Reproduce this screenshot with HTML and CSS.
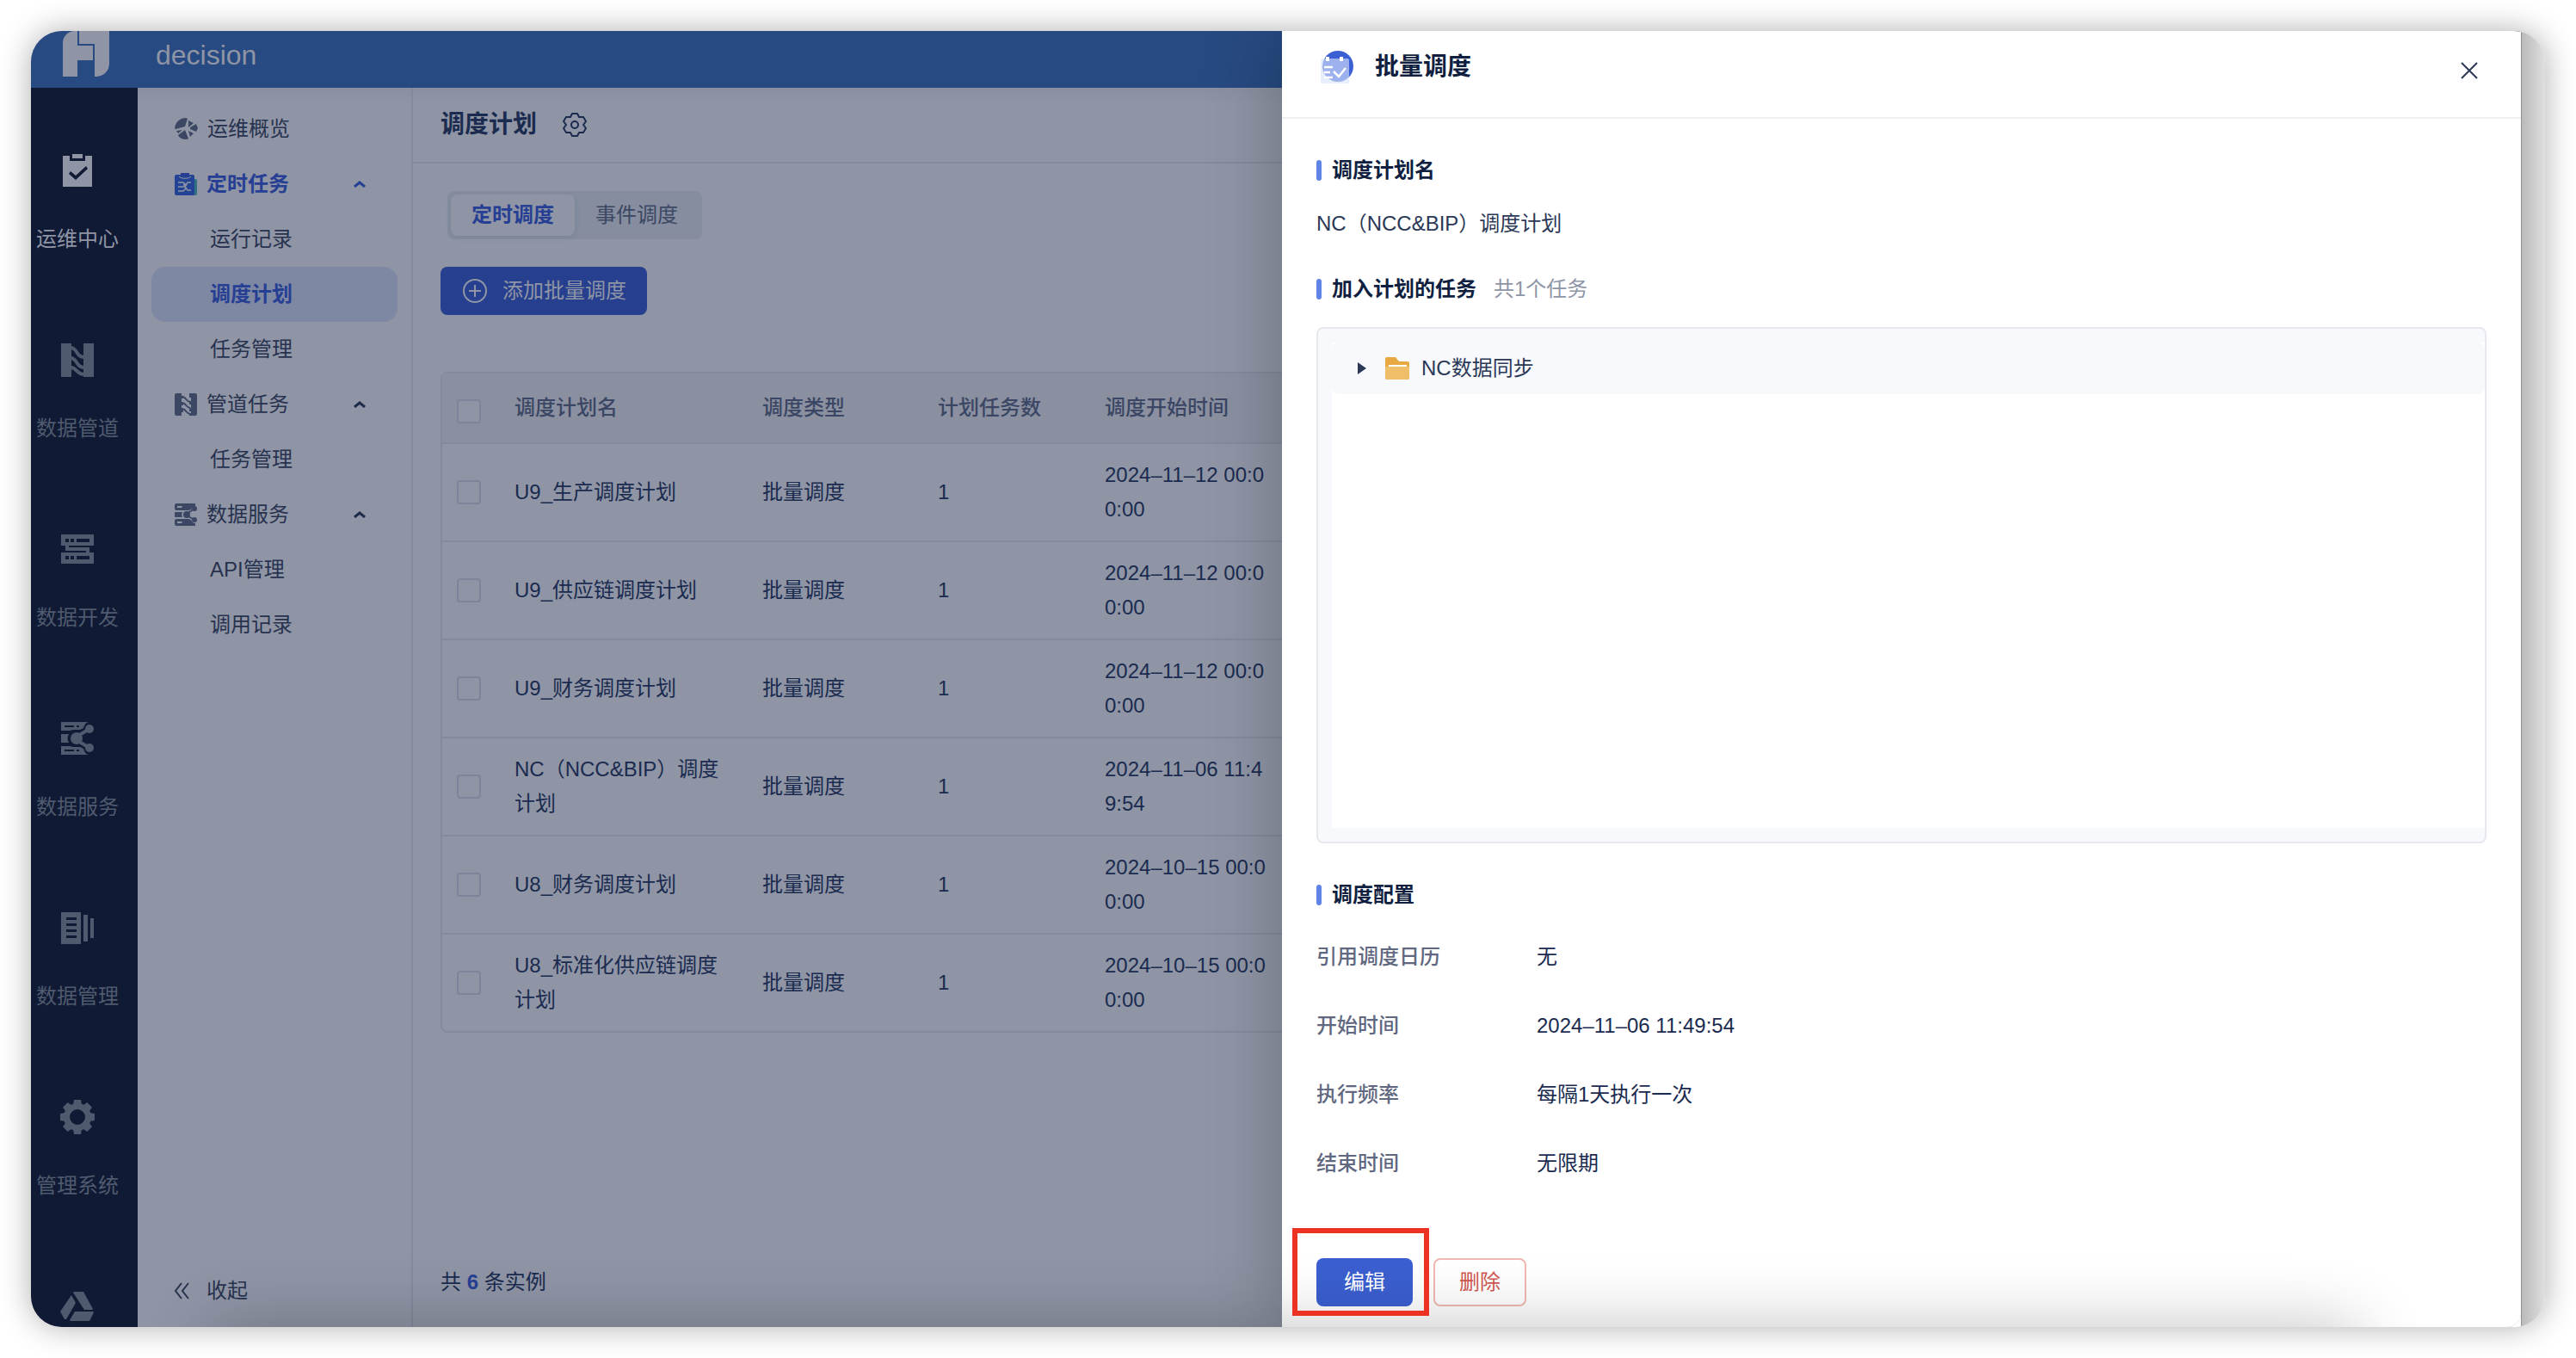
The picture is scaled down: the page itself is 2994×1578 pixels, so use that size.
FILE: index.html
```html
<!DOCTYPE html>
<html lang="zh-CN">
<head>
<meta charset="utf-8">
<title>调度计划 - decision</title>
<link rel="stylesheet" href="styles.css">
</head>
<body>
<svg class="sprite" aria-hidden="true">
  <symbol id="i-pipe" viewBox="0 0 38 39"><path d="M0 0h12v39H0zM26 0h12v39H26z" fill="currentColor"/><path d="M11 5c8 0 6 11 16 11M11 17c8 0 6 11 16 11M11 28c8 0 6 8 16 8" fill="none" stroke="currentColor" stroke-width="4"/></symbol>
  <symbol id="i-pipe-s" viewBox="0 0 26 26"><path d="M2 0h6v3h2v3H8v5h2v3H8v5h2v3H8v4H2a2 2 0 0 1-2-2V2a2 2 0 0 1 2-2zM24 0h-7v5h2v4h-2v4h2v4h-2v4h2v2h-2v3h7a2 2 0 0 0 2-2V2a2 2 0 0 0-2-2z" fill="currentColor"/><path d="M8 4c6 0 4 5 10 6M8 11c6 0 4 5 10 6M8 18c6 0 4 5 10 6" fill="none" stroke="currentColor" stroke-width="2"/></symbol>
  <symbol id="i-service" viewBox="0 0 38 38"><path fill-rule="evenodd" d="M0 0h32c-4 1-5 4-6 7l-4 2h-8l-4 1H0zM4 4v2h11V4zM18 4v2h3V4zM0 14h9c-2 3-2 7 0 10H0zM0 28h10l4 1h8l4 2c1 3 2 6 6 7H0zM4 32v2h11v-2zM18 32v2h3v-2z" fill="currentColor"/><circle cx="18" cy="19" r="7" fill="currentColor"/><circle cx="33" cy="8" r="5" fill="currentColor"/><circle cx="33" cy="30" r="5" fill="currentColor"/><path d="M33 8 18 17M33 30 18 21" stroke="currentColor" stroke-width="4"/></symbol>
  <symbol id="i-service-s" viewBox="0 0 26 26"><path fill-rule="evenodd" d="M2 0h22v3c-3 0-4 2-5 4l-3 1H2a2 2 0 0 1-2-2V2a2 2 0 0 1 2-2zM3 3v2h5l1-2zM1 10h8c-1 2-1 4 0 6H1a1 1 0 0 1-1-1v-4a1 1 0 0 1 1-1zM2 18h14l3 1c1 2 2 4 5 4v3H2a2 2 0 0 1-2-2v-4a2 2 0 0 1 2-2zM3 21v2h5l1-2z" fill="currentColor"/><circle cx="14" cy="13" r="4" fill="currentColor"/><circle cx="23" cy="6" r="3" fill="currentColor"/><circle cx="23" cy="19" r="3" fill="currentColor"/><path d="m23 6-9 6M23 19l-9-5" stroke="currentColor" stroke-width="2"/></symbol>
  <symbol id="i-up" viewBox="0 0 14 8"><path d="m1 7 6-5 6 5" fill="none" stroke="currentColor" stroke-width="3"/></symbol>
</svg>

<div class="window">
  <div class="app">
    <header class="topbar">
      <svg class="logo" viewBox="0 0 54 53" aria-label="logo"><path d="M17 0v17h18v17H17v19H0V14A14 14 0 0 1 14 0zM19 0h35v38a15 15 0 0 1-15 15h-2V15H19z" fill="currentColor"/></svg>
      <span class="brand">decision</span>
    </header>

    <div class="body">
      <nav class="rail" aria-label="主导航">
        <a class="rail-item is-active" href="#ops"><svg width="34" height="38" viewBox="0 0 34 38"><path fill-rule="evenodd" d="M0 2h8v6h18V2h8v36H0zM9 20l-2 3 8 7 14-13-2-3-12 11z" fill="currentColor"/><path d="M11 0h12v5H11z" fill="currentColor"/></svg><span>运维中心</span></a>
        <a class="rail-item" href="#pipe"><svg width="38" height="39"><use href="#i-pipe"/></svg><span>数据管道</span></a>
        <a class="rail-item" href="#dev"><svg width="38" height="34" viewBox="0 0 38 34"><path fill-rule="evenodd" d="M0 0h38v13H0zM5 5v4h4V5zM11 5v4h4V5zM18 5v4h15V5zM0 21h38v13H0zM5 25v4h4v-4zM11 25v4h4v-4zM18 25v4h15v-4zM5 13h4v2h24v6h-4v-2H5z" fill="currentColor"/></svg><span>数据开发</span></a>
        <a class="rail-item" href="#service"><svg width="38" height="38"><use href="#i-service"/></svg><span>数据服务</span></a>
        <a class="rail-item" href="#manage"><svg width="38" height="37" viewBox="0 0 38 37"><path fill-rule="evenodd" d="M0 0h23v37H0zM6 6v3h12V6zM6 13v3h12v-3zM6 20v3h12v-3zM6 27v3h12v-3zM26 3h5v31h-5zM34 7h4v23h-4z" fill="currentColor"/></svg><span>数据管理</span></a>
        <a class="rail-item" href="#system"><svg width="40" height="40" viewBox="-20 -20 40 40"><g fill="currentColor"><path fill-rule="evenodd" d="M0-16a16 16 0 1 0 0 32 16 16 0 1 0 0-32zM0-9a9 9 0 1 1 0 18 9 9 0 1 1 0-18z"/><path id="tooth" d="m-5-14 1-6h8l1 6z"/><use href="#tooth" transform="rotate(45)"/><use href="#tooth" transform="rotate(90)"/><use href="#tooth" transform="rotate(135)"/><use href="#tooth" transform="rotate(180)"/><use href="#tooth" transform="rotate(225)"/><use href="#tooth" transform="rotate(270)"/><use href="#tooth" transform="rotate(315)"/></g></svg><span>管理系统</span></a>
        <a class="rail-item" href="#drive" aria-label="更多"><svg width="40" height="36" viewBox="0 0 40 36"><path d="M16 1h11l11 20-1 1H28L15 2zM13 5l5 9-11 19H5L0 24zM17 24h21l1 1-5 10H12l-1-1z" fill="currentColor"/></svg></a>
      </nav>

      <aside class="side">
        <ul class="menu">
          <li><a href="#overview"><svg width="27" height="26" viewBox="0 0 27 26"><path d="M0 12C1 4 7 0 13 0l2 1-3 9-11 3zM16 3l6 3-6 5zM18 11l7-4 2 5-2 4-7-3zM16 15l6 3-4 4zM12 14l4 10-2 1c-5 0-9-2-10-5zM2 15l7-1-5 4z" fill="currentColor"/></svg><span>运维概览</span></a></li>
          <li><a class="is-open" href="#timed"><svg width="26" height="26" viewBox="0 0 26 26"><path d="M20 7h4a2 2 0 0 1 2 2v15a2 2 0 0 1-2 2h-4z" fill="#2f7181"/><path d="M2 2h19a2 2 0 0 1 2 2v20a2 2 0 0 1-2 2H2a2 2 0 0 1-2-2V4a2 2 0 0 1 2-2z" fill="#234494"/><path d="M5 4c2 3 12 3 14 0" fill="none" stroke="#8f95a5" stroke-width="1"/><path d="M7 0h10v4H7z" fill="#263f94"/><path d="M4 11h6l3 3h-3M4 16h8M4 21h6l3-3M19 11h-4l-3 5 3 4h4" fill="none" stroke="#8f95a5" stroke-width="1.5"/></svg><span>定时任务</span><svg class="caret" width="14" height="8"><use href="#i-up"/></svg></a></li>
          <li><a class="sub" href="#runs">运行记录</a></li>
          <li><a class="sub is-selected" href="#plans">调度计划</a></li>
          <li><a class="sub" href="#tasks">任务管理</a></li>
          <li><a href="#pipe-tasks"><svg width="26" height="26"><use href="#i-pipe-s"/></svg><span>管道任务</span><svg class="caret" width="14" height="8"><use href="#i-up"/></svg></a></li>
          <li><a class="sub" href="#pipe-manage">任务管理</a></li>
          <li><a href="#services"><svg width="26" height="26"><use href="#i-service-s"/></svg><span>数据服务</span><svg class="caret" width="14" height="8"><use href="#i-up"/></svg></a></li>
          <li><a class="sub" href="#api">API管理</a></li>
          <li><a class="sub" href="#calls">调用记录</a></li>
        </ul>
        <button class="collapse" type="button"><svg width="26" height="20" viewBox="0 0 26 20"><path d="M9 1 2 10l7 9M17 1l-7 9 7 9" fill="none" stroke="currentColor" stroke-width="2"/></svg><span>收起</span></button>
      </aside>

      <main class="main">
        <div class="page-head">
          <h1>调度计划</h1>
          <button class="icon-btn" type="button" aria-label="设置"><svg width="28" height="28" viewBox="0 0 28 28"><path d="M11 1h6l2 4h5l3 5-3 4 3 4-3 5h-5l-2 4h-6l-2-4H4l-3-5 3-4-3-4 3-5h5z" fill="none" stroke="currentColor" stroke-width="2" stroke-linejoin="round"/><circle cx="14" cy="14" r="4" fill="none" stroke="currentColor" stroke-width="2"/></svg></button>
        </div>
        <div class="content">
          <div class="tabs" role="tablist">
            <button class="tab is-on" role="tab" aria-selected="true" type="button">定时调度</button>
            <button class="tab" role="tab" aria-selected="false" type="button">事件调度</button>
          </div>
          <button class="add" type="button"><svg width="28" height="28" viewBox="0 0 28 28"><circle cx="14" cy="14" r="13" fill="none" stroke="currentColor" stroke-width="2"/><path d="M14 7v14M7 14h14" stroke="currentColor" stroke-width="2"/></svg><span>添加批量调度</span></button>

          <table class="plans">
            <colgroup><col class="c-check"><col class="c-name"><col class="c-type"><col class="c-count"><col class="c-start"><col></colgroup>
            <thead>
              <tr><th class="check"><input type="checkbox" aria-label="全选"></th><th>调度计划名</th><th>调度类型</th><th>计划任务数</th><th>调度开始时间</th><th></th></tr>
            </thead>
            <tbody>
              <tr><td class="check"><input type="checkbox" aria-label="选择"></td><td>U9_生产调度计划</td><td>批量调度</td><td>1</td><td>2024–11–12 00:00:00</td><td></td></tr>
              <tr><td class="check"><input type="checkbox" aria-label="选择"></td><td>U9_供应链调度计划</td><td>批量调度</td><td>1</td><td>2024–11–12 00:00:00</td><td></td></tr>
              <tr><td class="check"><input type="checkbox" aria-label="选择"></td><td>U9_财务调度计划</td><td>批量调度</td><td>1</td><td>2024–11–12 00:00:00</td><td></td></tr>
              <tr><td class="check"><input type="checkbox" aria-label="选择"></td><td>NC（NCC&amp;BIP）调度计划</td><td>批量调度</td><td>1</td><td>2024–11–06 11:49:54</td><td></td></tr>
              <tr><td class="check"><input type="checkbox" aria-label="选择"></td><td>U8_财务调度计划</td><td>批量调度</td><td>1</td><td>2024–10–15 00:00:00</td><td></td></tr>
              <tr><td class="check"><input type="checkbox" aria-label="选择"></td><td>U8_标准化供应链调度计划</td><td>批量调度</td><td>1</td><td>2024–10–15 00:00:00</td><td></td></tr>
            </tbody>
          </table>
          <p class="total">共 <b>6</b> 条实例</p>
        </div>
      </main>
    </div>

    <section class="drawer" role="dialog" aria-labelledby="drawer-title">
      <header class="drawer-head">
        <svg width="38" height="40" viewBox="0 0 38 40"><circle cx="20" cy="19" r="18" fill="#3b5fd4"/><path d="M2 10h29a2 2 0 0 1 2 2v25a2 2 0 0 1-2 2H2a2 2 0 0 1-2-2V12a2 2 0 0 1 2-2z" fill="#d9e3fb" fill-opacity=".62"/><path d="M8 8v5M24 8v5" stroke="#fff" stroke-width="4"/><path d="M4 20h10M4 26h7M4 32h10M15 25l6 6 8-10" fill="none" stroke="#fff" stroke-width="2.5"/></svg>
        <h2 id="drawer-title">批量调度</h2>
        <button class="close" type="button" aria-label="关闭"><svg width="20" height="20" viewBox="0 0 20 20"><path d="m1 1 18 18M19 1 1 19" stroke="currentColor" stroke-width="2"/></svg></button>
      </header>
      <div class="drawer-body">
        <h3 class="sec">调度计划名</h3>
        <p class="plan-name">NC（NCC&amp;BIP）调度计划</p>
        <h3 class="sec">加入计划的任务<span class="hint">共1个任务</span></h3>
        <div class="tree">
          <div class="tree-inner">
            <div class="node">
              <svg class="arrow" width="10" height="14" viewBox="0 0 10 14"><path d="m0 0 10 7-10 7z" fill="#2b3856"/></svg>
              <svg width="28" height="26" viewBox="0 0 28 26"><path d="M2 0h10l4 5h10a2 2 0 0 1 2 2v17a2 2 0 0 1-2 2H2a2 2 0 0 1-2-2V2a2 2 0 0 1 2-2z" fill="#e8a943"/><path d="M0 11h28v12a3 3 0 0 1-3 3H3a3 3 0 0 1-3-3z" fill="#efbe68"/><path d="M4 10h21" stroke="#fff" stroke-width="2"/></svg>
              <span>NC数据同步</span>
            </div>
          </div>
        </div>
        <h3 class="sec">调度配置</h3>
        <dl class="config">
          <div><dt>引用调度日历</dt><dd>无</dd></div>
          <div><dt>开始时间</dt><dd>2024–11–06 11:49:54</dd></div>
          <div><dt>执行频率</dt><dd>每隔1天执行一次</dd></div>
          <div><dt>结束时间</dt><dd>无限期</dd></div>
        </dl>
        <div class="actions">
          <div class="marked"><button class="btn btn-primary" type="button">编辑</button></div>
          <button class="btn btn-danger" type="button">删除</button>
        </div>
      </div>
    </section>
  </div>
</div>
</body>
</html>
```
FILE: styles.css
```css
* { box-sizing: border-box; }

body {
  margin: 0;
  height: 100vh;
  padding: 36px;
  background: #fff;
  color: #1a2b4f;
  font: 24px/40px "Liberation Sans", "Noto Sans CJK SC", sans-serif;
}

h1, h2, h3, p, ul, dl, dd { margin: 0; padding: 0; }
ul { list-style: none; }
a { color: inherit; text-decoration: none; }
button { font: inherit; color: inherit; margin: 0; padding: 0; border: 0; background: none; }
svg { display: block; flex: none; }
.sprite { position: absolute; width: 0; height: 0; }

/* window frame */
.window {
  height: 100%;
  padding-right: 28px;
  border-radius: 36px;
  overflow: hidden;
  background: linear-gradient(to left, #dfdfdf 0, #bababa 27px, #929292 27px, #929292 28px, #fff 28px);
  box-shadow: 0 0 36px rgba(0, 0, 0, .32);
}
.app {
  position: relative;
  display: flex;
  flex-direction: column;
  height: 100%;
  overflow: hidden;
  border-bottom-right-radius: 16px;
  background: #8f95a5;
}
/* shade cast on the lower edge */
.app::after {
  content: "";
  position: absolute;
  left: 210px;
  right: 190px;
  top: 100%;
  height: 160px;
  box-shadow: 0 0 80px rgba(0, 0, 0, .24);
}

.topbar {
  display: flex;
  align-items: flex-start;
  gap: 54px;
  flex: none;
  height: 66px;
  padding-left: 37px;
  background: #274a82;
  color: #8f95a5;
}
.logo { width: 54px; height: 53px; }
.brand { font-size: 32px; line-height: 56px; }

.body { display: flex; flex: 1; min-height: 0; }

/* icon rail */
.rail {
  flex: none;
  width: 124px;
  padding: 76px 16px 0 0;
  overflow: hidden;
  background: #101a35;
  color: #4f5a6e;
}
.rail-item {
  display: grid;
  grid-template-rows: 40px 40px;
  gap: 40px;
  height: 220px;
  place-items: center;
  align-content: start;
}
.rail-item.is-active { color: #8f95a5; }

/* side menu */
.side {
  display: flex;
  flex-direction: column;
  flex: none;
  width: 320px;
  padding: 16px 16px 10px;
  border-right: 2px solid #838a9c;
  background: linear-gradient(#8a90a0, #8f95a5 20px);
  color: #27324f;
}
.menu a {
  display: flex;
  align-items: center;
  height: 64px;
  padding-left: 27px;
  border-radius: 16px;
}
.menu svg { color: #3c4763; }
.menu svg + span { margin-left: 11px; }
.menu .caret { margin-left: auto; margin-right: 37px; color: #1f2b4a; }
.menu .sub { padding-left: 68px; }
.menu .is-open, .menu .is-open .caret, .menu .is-selected { color: #263f94; font-weight: 700; }
.menu .is-selected { background: #7f88a3; }
.collapse {
  display: flex;
  align-items: center;
  gap: 12px;
  height: 64px;
  margin-top: auto;
  padding-left: 26px;
}

/* page */
.main { display: flex; flex-direction: column; flex: 1; min-width: 0; }
.page-head {
  display: flex;
  align-items: center;
  gap: 30px;
  height: 88px;
  padding-left: 32px;
  border-bottom: 2px solid #838a9c;
  background: linear-gradient(#8a90a0, #8f95a5 20px);
}
.page-head h1 { font-size: 28px; font-weight: 700; }
.content {
  display: flex;
  flex-direction: column;
  align-items: flex-start;
  flex: 1;
  padding: 32px;
}
.tabs {
  display: flex;
  margin: 0 8px 32px;
  padding: 4px;
  border-radius: 8px;
  background: #858d9f;
}
.tab { width: 144px; height: 48px; border-radius: 8px; color: #3c4763; }
.tab.is-on {
  background: #8f95a5;
  color: #263f94;
  font-weight: 700;
  box-shadow: 0 2px 6px rgba(40, 50, 80, .1);
}
.add {
  display: flex;
  align-items: center;
  gap: 18px;
  height: 56px;
  margin-bottom: 66px;
  padding: 0 24px 0 26px;
  border-radius: 8px;
  background: #263f8e;
  color: #8f95a5;
}

.plans {
  width: 100%;
  table-layout: fixed;
  border: 2px solid #838a9c;
  border-radius: 8px;
  border-spacing: 0;
}
.c-check { width: 84px; }
.c-name { width: 288px; }
.c-type { width: 204px; }
.c-count { width: 194px; }
.c-start { width: 228px; }
.plans th, .plans td {
  height: 114px;
  padding: 0 36px 0 0;
  border-bottom: 2px solid #838a9c;
  text-align: left;
  font-weight: 400;
  word-break: break-all;
}
.plans th { height: 82px; background: #8a90a0; color: #3a4664; font-weight: 500; }
.plans tr:last-child td { height: 112px; border-bottom: 0; }
.plans .check { padding: 0 0 0 17px; }
.plans th.check { padding-top: 8px; }
.plans input {
  appearance: none;
  display: block;
  width: 28px;
  height: 28px;
  margin: 0;
  border: 2px solid #7c849a;
  border-radius: 4px;
  background: #8f95a5;
}
.total { margin-top: auto; }
.total b { color: #263f94; font-weight: 700; }

/* drawer */
.drawer {
  position: absolute;
  top: 0;
  right: 0;
  bottom: 0;
  display: flex;
  flex-direction: column;
  width: 1440px;
  max-width: 100%;
  background: #fff;
  box-shadow: 0 0 80px rgba(0, 0, 0, .26);
}
.drawer-head {
  display: flex;
  align-items: flex-start;
  flex: none;
  height: 102px;
  padding: 22px 40px 0 45px;
  border-bottom: 2px solid #eff0f2;
}
.drawer-head h2 { margin-left: 25px; font-size: 28px; font-weight: 700; color: #101f3f; }
.close {
  display: grid;
  place-items: center;
  width: 40px;
  height: 48px;
  margin-left: auto;
  color: #2b3856;
}
.drawer-body {
  display: flex;
  flex-direction: column;
  flex: 1;
  min-height: 0;
  padding: 48px 40px 24px;
}
.sec {
  display: flex;
  align-items: center;
  height: 24px;
  font-size: 24px;
  font-weight: 700;
  color: #101f3f;
}
.sec::before {
  content: "";
  width: 6px;
  height: 24px;
  margin-right: 12px;
  border-radius: 3px;
  background: #5f84e6;
}
.hint { margin-left: 20px; font-weight: 400; color: #8d95a6; }
.plan-name { margin: 30px 0 44px; color: #2b3856; }
.tree {
  flex: 1;
  margin: 32px 0 48px;
  padding: 16px 0 16px 16px;
  border: 2px solid #e6e8ee;
  border-radius: 8px;
  background: #f7f9fd;
}
.tree-inner { height: 100%; background: #fff; }
.node {
  display: flex;
  align-items: center;
  height: 60px;
  padding-left: 30px;
  border-radius: 8px;
  background: #f7f9fd;
  color: #2b3856;
}
.arrow { margin-right: 22px; }
.node span { margin-left: 14px; }
.config { margin: 20px 0 70px; }
.config div { display: grid; grid-template-columns: 256px 1fr; align-items: center; height: 80px; }
.config dt { font-weight: 500; color: #5f6880; }
.actions { display: flex; gap: 24px; }
.btn { display: block; height: 56px; border-radius: 8px; }
.btn-primary { width: 112px; background: #3b5fd0; color: #fff; }
.btn-danger { width: 108px; border: 2px solid #f2b8b3; color: #d0564f; }
.marked { position: relative; }
.marked::after {
  content: "";
  position: absolute;
  z-index: 1;
  inset: -35px -19px -11px -28px;
  border: 6px solid #ec3323;
  pointer-events: none;
}
```
